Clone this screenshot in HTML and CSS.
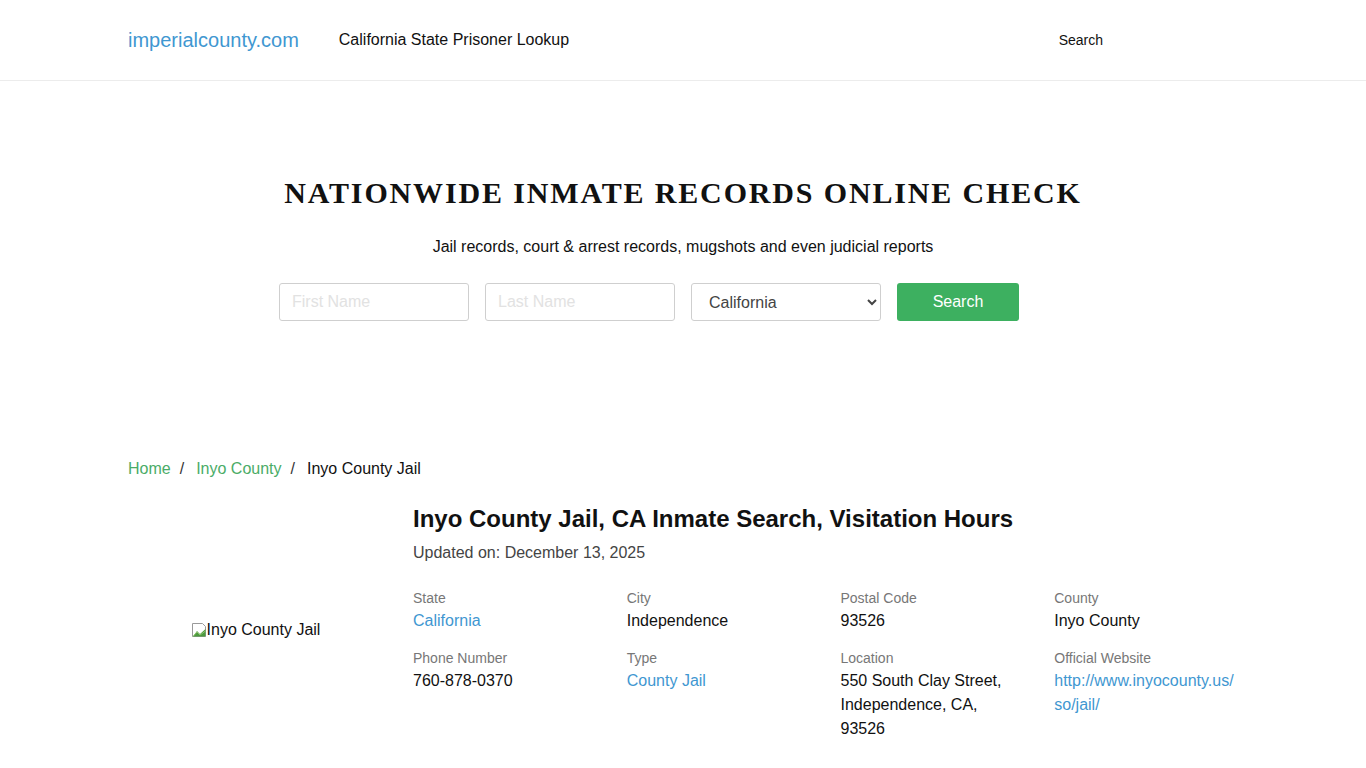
FILE: index.html
```html
<!DOCTYPE html>
<html lang="en">
<head>
<meta charset="utf-8">
<title>Inyo County Jail, CA Inmate Search, Visitation Hours</title>
<link rel="stylesheet" href="styles.css">
</head>
<body>
<header class="site-header">
  <div class="container header-inner">
    <a class="logo" href="#">imperialcounty.com</a>
    <a class="nav-link" href="#">California State Prisoner Lookup</a>
    <a class="nav-search" href="#">Search</a>
  </div>
</header>

<section class="hero">
  <div class="container hero-inner">
    <h2 class="hero-title">NATIONWIDE INMATE RECORDS ONLINE CHECK</h2>
    <p class="hero-sub">Jail records, court &amp; arrest records, mugshots and even judicial reports</p>
    <form class="search-form">
      <input class="field" type="text" placeholder="First Name">
      <input class="field" type="text" placeholder="Last Name">
      <select class="field select">
        <option>California</option>
      </select>
      <button class="btn-search" type="button">Search</button>
    </form>
  </div>
</section>

<main class="container">
  <nav class="breadcrumb">
    <a class="crumb" href="#">Home</a>
    <span class="sep">/</span>
    <a class="crumb" href="#">Inyo County</a>
    <span class="sep">/</span>
    <span class="crumb-current">Inyo County Jail</span>
  </nav>

  <div class="facility">
    <div class="facility-img">
      <span class="broken">
        <svg class="broken-icon" width="16" height="16" viewBox="0 0 16 16">
          <path d="M1.5 1.5h10l3 3v10h-13z" fill="#fff" stroke="#9a9a9a"/>
          <path d="M2 14.5 L6 9 L9 12 L14.5 7 V14.5 Z" fill="#4c9a3f"/>
          <path d="M2 14.5 L6 10 L9 13 L14.5 9" fill="none" stroke="#8fc46d" stroke-width="1"/>
        </svg>Inyo County Jail
      </span>
    </div>
    <div class="facility-info">
      <h1 class="facility-title">Inyo County Jail, CA Inmate Search, Visitation Hours</h1>
      <p class="updated">Updated on: December 13, 2025</p>
      <div class="details">
        <div class="detail">
          <div class="label">State</div>
          <a class="value link" href="#">California</a>
        </div>
        <div class="detail">
          <div class="label">City</div>
          <div class="value">Independence</div>
        </div>
        <div class="detail">
          <div class="label">Postal Code</div>
          <div class="value">93526</div>
        </div>
        <div class="detail">
          <div class="label">County</div>
          <div class="value">Inyo County</div>
        </div>
        <div class="detail">
          <div class="label">Phone Number</div>
          <div class="value">760-878-0370</div>
        </div>
        <div class="detail">
          <div class="label">Type</div>
          <a class="value link" href="#">County Jail</a>
        </div>
        <div class="detail">
          <div class="label">Location</div>
          <div class="value">550 South Clay Street, Independence, CA, 93526</div>
        </div>
        <div class="detail">
          <div class="label">Official Website</div>
          <a class="value link" href="#">http://www.inyocounty.us/<br>so/jail/</a>
        </div>
      </div>
    </div>
  </div>
</main>
</body>
</html>
```

FILE: styles.css
```css
* { box-sizing: border-box; }
html, body { margin: 0; padding: 0; }
body {
  font-family: "Liberation Sans", Arial, sans-serif;
  font-size: 16px;
  line-height: 1.5;
  color: #212529;
  background: #fff;
}
a { text-decoration: none; }

.container {
  width: 1140px;
  margin: 0 auto;
  padding: 0 15px;
}

/* header */
.site-header {
  border-bottom: 1px solid #ececec;
}
.header-inner {
  height: 80px;
  display: flex;
  align-items: center;
}
.logo {
  font-size: 20px;
  color: #3f97d1;
  line-height: 30px;
}
.nav-link {
  margin-left: 40px;
  font-size: 16px;
  color: #111;
}
.nav-search {
  margin-left: auto;
  margin-right: 135px;
  font-size: 14px;
  color: #111;
}

/* hero */
.hero-inner {
  padding-top: 93px;
  padding-bottom: 136px;
  text-align: center;
}
.hero-title {
  margin: 0;
  font-family: "Liberation Serif", "Times New Roman", serif;
  font-weight: 700;
  font-size: 30px;
  line-height: 38px;
  letter-spacing: 1.85px;
  color: #111;
}
.hero-sub {
  margin: 23px 0 0;
  font-size: 16px;
  line-height: 24px;
  color: #111;
}
.search-form {
  margin-top: 24px;
  display: flex;
  justify-content: center;
  gap: 16px;
  padding-right: 68px;
}
.field {
  width: 190px;
  height: 38px;
  border: 1px solid #cfcfcf;
  border-radius: 3px;
  padding: 0 12px;
  font-family: "Liberation Sans", Arial, sans-serif;
  font-size: 16px;
  color: #444;
  background: #fff;
}
.field::placeholder { color: #e2e2e2; }
.select { padding: 0 8px 0 13px; }
.btn-search {
  width: 122px;
  height: 38px;
  border: 0;
  border-radius: 3px;
  background: #3db060;
  color: #fff;
  font-family: "Liberation Sans", Arial, sans-serif;
  font-size: 16px;
}

/* breadcrumb */
.breadcrumb {
  display: flex;
  align-items: center;
  font-size: 16px;
  line-height: 24px;
}
.crumb { color: #4aac67; }
.sep { padding: 0 12px 0 9px; color: #333; }
.crumb-current { color: #111; }

/* facility */
.facility {
  display: flex;
  align-items: center;
  margin: 23px -15px 0;
}
.facility-img {
  width: 285px;
  padding: 0 15px;
  display: flex;
  justify-content: center;
}
.broken {
  display: inline-flex;
  align-items: center;
  font-size: 16px;
  color: #111;
}
.facility-info {
  width: 855px;
  padding: 0 15px;
}
.facility-title {
  margin: 0;
  font-size: 24px;
  line-height: 29px;
  font-weight: 700;
  color: #111;
}
.updated {
  margin: 8px 0 0;
  font-size: 16px;
  line-height: 24px;
  color: #444;
}
.details {
  margin: 23px -15px 0;
  display: grid;
  grid-template-columns: repeat(4, 1fr);
}
.detail {
  padding: 0 15px;
  margin-bottom: 15px;
}
.label {
  font-size: 14px;
  line-height: 21px;
  color: #777;
}
.value {
  display: block;
  font-size: 16px;
  line-height: 24px;
  color: #111;
}
.value.link { color: #3f97d1; }
```
